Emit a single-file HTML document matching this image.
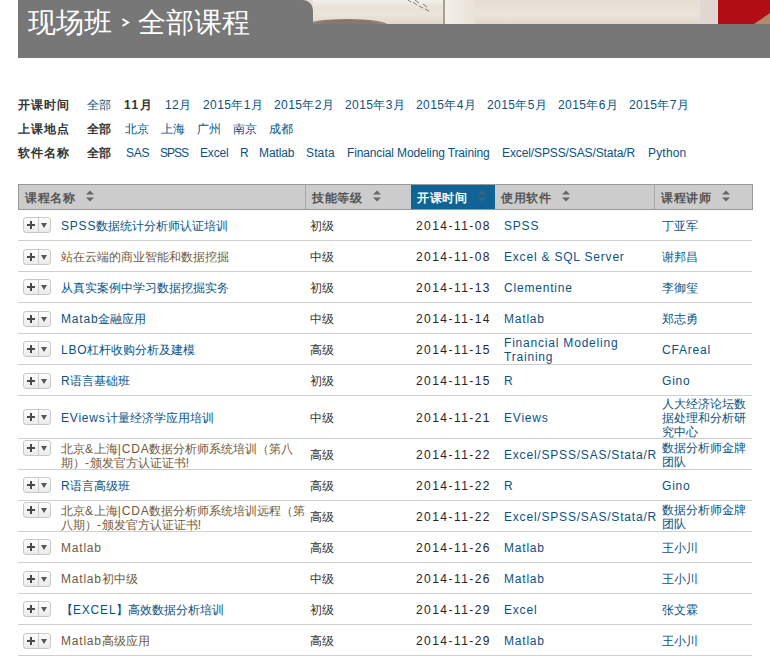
<!DOCTYPE html>
<html><head><meta charset="utf-8">
<style>
*{margin:0;padding:0;box-sizing:border-box}
html,body{width:770px;height:656px;overflow:hidden;background:#fff}
body{position:relative;font-family:"Liberation Sans",sans-serif;font-size:12px;color:#333}
.a{position:absolute;white-space:nowrap}
.photo{position:absolute;left:300px;top:0;width:470px;height:24px;background:linear-gradient(180deg,#e6ded3 0%,#ebe4da 60%,#e2d8cc 100%);overflow:hidden}
.tab{position:absolute;left:18px;top:0;width:295px;height:40px;background:#777;border-top-right-radius:10px}
.bar{position:absolute;left:18px;top:24px;width:752px;height:34px;background:#777}
.title{position:absolute;top:4px;color:#fff;font-family:"Liberation Serif",serif;font-size:28px;line-height:34px;white-space:nowrap}
.flab{font-weight:bold;color:#333}
.fl{position:absolute;line-height:24px;white-space:nowrap;color:#0a5283;letter-spacing:.4px}
.fl.flab{color:#333;letter-spacing:1px}
.hd{position:absolute;left:18px;top:184px;width:735px;height:26px;background:#ccc;border:1px solid #999}
.th{position:absolute;top:1px;height:24px;line-height:24px;letter-spacing:.7px;font-weight:bold;color:#555;white-space:nowrap}
.sep{position:absolute;top:0;width:1px;height:24px;background:#a8a8a8}
.act{position:absolute;left:392px;top:0;width:84px;height:24px;background:#0f6495}
.sort{position:absolute;top:5px;width:8px;height:12px}
.line{position:absolute;left:18px;width:734px;height:1px;background:#cfcfcf}
.cell{position:absolute;white-space:nowrap;line-height:14px;margin-top:1px}
.lt{letter-spacing:0.8px}
.dt{letter-spacing:1.45px;color:#262626}
.btn{position:absolute;margin-top:1px;left:23px;width:28px;height:16px;border:1px solid #c8c8c8;border-radius:3px;background:linear-gradient(#fdfdfd,#ebebeb)}
.btn i{position:absolute;left:14px;top:0;width:1px;height:14px;background:#cdcdcd}
.pl1{position:absolute;left:3px;top:6px;width:8px;height:2px;background:#4a4a4a}
.pl2{position:absolute;left:6px;top:3px;width:2px;height:8px;background:#4a4a4a}
.tri{position:absolute;left:17px;top:5px;width:0;height:0;border-left:3px solid transparent;border-right:3px solid transparent;border-top:5px solid #555}
</style></head><body>

<div class="photo">
 <div style="position:absolute;left:13px;top:0;width:130px;height:8px;background:linear-gradient(180deg,#f3f0eb,rgba(243,240,235,0))"></div>
 <div style="position:absolute;left:6px;top:19px;width:82px;height:12px;border-radius:50%;background:radial-gradient(ellipse at 50% 40%,#86766f 40%,#9a8c86 70%,#c9bfb5 100%)"></div>
 <svg style="position:absolute;left:105px;top:0" width="30" height="14"><path d="M3 0L6 2M8 2L12 5M14 6L18 8M20 9L24 11M10 0L14 3M18 4L22 7" stroke="#6b6259" stroke-width="1" opacity=".8"/></svg>
 <div style="position:absolute;left:143px;top:0;width:2px;height:24px;background:#aaa190"></div>
 <div style="position:absolute;left:145px;top:0;width:30px;height:24px;background:linear-gradient(90deg,#f2efea,#e9e3d9)"></div>
 <div style="position:absolute;left:400px;top:0;width:18px;height:24px;background:#e2d8d3"></div>
 <div style="position:absolute;left:418px;top:0;width:52px;height:24px;background:#b20e15"></div>
 <div style="position:absolute;left:454px;top:13px;width:0;height:0;border-bottom:11px solid #b38b6b;border-left:16px solid transparent"></div>
</div>
<div class="tab"></div>
<div class="bar"></div>
<div class="title" style="left:28px;top:6px">现场班</div>
<svg style="position:absolute;left:121px;top:18px" width="9" height="9"><path d="M1.5 1L7 4.5L1.5 8" stroke="#fff" stroke-width="2" fill="none"/></svg>
<div class="title" style="left:138px;top:6px">全部课程</div>

<div class="fl flab" style="left:18px;top:93px">开课时间</div>
<div class="fl flab" style="left:18px;top:117px">上课地点</div>
<div class="fl flab" style="left:18px;top:141px">软件名称</div>
<div class="fl" style="left:87px;top:93px">全部</div>
<div class="fl" style="left:124px;top:93px;color:#333;font-weight:bold;letter-spacing:1.6px">11月</div>
<div class="fl" style="left:165px;top:93px">12月</div>
<div class="fl" style="left:203px;top:93px">2015年1月</div>
<div class="fl" style="left:274px;top:93px">2015年2月</div>
<div class="fl" style="left:345px;top:93px">2015年3月</div>
<div class="fl" style="left:416px;top:93px">2015年4月</div>
<div class="fl" style="left:487px;top:93px">2015年5月</div>
<div class="fl" style="left:558px;top:93px">2015年6月</div>
<div class="fl" style="left:629px;top:93px">2015年7月</div>
<div class="fl" style="left:87px;top:117px;color:#333;font-weight:bold">全部</div>
<div class="fl" style="left:125px;top:117px">北京</div>
<div class="fl" style="left:161px;top:117px">上海</div>
<div class="fl" style="left:197px;top:117px">广州</div>
<div class="fl" style="left:233px;top:117px">南京</div>
<div class="fl" style="left:269px;top:117px">成都</div>
<div class="fl" style="left:87px;top:141px;color:#333;font-weight:bold">全部</div>
<div class="fl" style="left:126px;top:141px;letter-spacing:-0.27px">SAS</div>
<div class="fl" style="left:160px;top:141px;letter-spacing:-1px">SPSS</div>
<div class="fl" style="left:200px;top:141px;letter-spacing:-0.16px">Excel</div>
<div class="fl" style="left:240px;top:141px;letter-spacing:0px">R</div>
<div class="fl" style="left:259px;top:141px;letter-spacing:-0.1px">Matlab</div>
<div class="fl" style="left:306px;top:141px;letter-spacing:0.14px">Stata</div>
<div class="fl" style="left:347px;top:141px;letter-spacing:-0.13px">Financial Modeling Training</div>
<div class="fl" style="left:502px;top:141px;letter-spacing:-0.11px">Excel/SPSS/SAS/Stata/R</div>
<div class="fl" style="left:648px;top:141px;letter-spacing:0.18px">Python</div>
<div class="hd">
<div class="sep" style="left:286px"></div><div class="sep" style="left:635px"></div>
<div class="act"></div>
<div class="th" style="left:6px;color:#555">课程名称</div>
<div class="sort" style="left:67px"><svg width="8" height="12" viewBox="0 0 8 12"><path d="M0 4.5L4 0.5L8 4.5Z M0 7.5L4 11.5L8 7.5Z" fill="#666"/></svg></div>
<div class="th" style="left:293px;color:#555">技能等级</div>
<div class="sort" style="left:354px"><svg width="8" height="12" viewBox="0 0 8 12"><path d="M0 4.5L4 0.5L8 4.5Z M0 7.5L4 11.5L8 7.5Z" fill="#666"/></svg></div>
<div class="th" style="left:398px;color:#fff">开课时间</div>
<div class="sort" style="left:459px;opacity:.55"><svg width="8" height="12" viewBox="0 0 8 12"><path d="M0 4.5L4 0.5L8 4.5Z M0 7.5L4 11.5L8 7.5Z" fill="#666"/></svg></div>
<div class="th" style="left:482px;color:#555">使用软件</div>
<div class="sort" style="left:543px"><svg width="8" height="12" viewBox="0 0 8 12"><path d="M0 4.5L4 0.5L8 4.5Z M0 7.5L4 11.5L8 7.5Z" fill="#666"/></svg></div>
<div class="th" style="left:642px;color:#555">课程讲师</div>
<div class="sort" style="left:703px"><svg width="8" height="12" viewBox="0 0 8 12"><path d="M0 4.5L4 0.5L8 4.5Z M0 7.5L4 11.5L8 7.5Z" fill="#666"/></svg></div>
</div>
<div class="line" style="top:240px"></div>
<div class="btn" style="top:216px"><i></i><span class="pl1"></span><span class="pl2"></span><span class="tri"></span></div>
<div class="cell" style="left:61px;top:217.5px;color:#0a5283"><span class="lt">SPSS</span>数据统计分析师认证培训</div>
<div class="cell" style="left:310px;top:217.5px">初级</div>
<div class="cell dt" style="left:416px;top:217.5px">2014-11-08</div>
<div class="cell" style="left:504px;top:217.5px;color:#0a5283;letter-spacing:0.8px">SPSS</div>
<div class="cell" style="left:662px;top:217.5px;color:#0a5283">丁亚军</div>
<div class="line" style="top:271px"></div>
<div class="btn" style="top:248px"><i></i><span class="pl1"></span><span class="pl2"></span><span class="tri"></span></div>
<div class="cell" style="left:61px;top:248.5px;color:#6e5a40">站在云端的商业智能和数据挖掘</div>
<div class="cell" style="left:310px;top:248.5px">中级</div>
<div class="cell dt" style="left:416px;top:248.5px">2014-11-08</div>
<div class="cell" style="left:504px;top:248.5px;color:#0a5283;letter-spacing:0.8px">Excel &amp; SQL Server</div>
<div class="cell" style="left:662px;top:248.5px;color:#0a5283">谢邦昌</div>
<div class="line" style="top:302px"></div>
<div class="btn" style="top:278px"><i></i><span class="pl1"></span><span class="pl2"></span><span class="tri"></span></div>
<div class="cell" style="left:61px;top:279.5px;color:#0a5283">从真实案例中学习数据挖掘实务</div>
<div class="cell" style="left:310px;top:279.5px">初级</div>
<div class="cell dt" style="left:416px;top:279.5px">2014-11-13</div>
<div class="cell" style="left:504px;top:279.5px;color:#0a5283;letter-spacing:0.8px">Clementine</div>
<div class="cell" style="left:662px;top:279.5px;color:#0a5283">李御玺</div>
<div class="line" style="top:333px"></div>
<div class="btn" style="top:310px"><i></i><span class="pl1"></span><span class="pl2"></span><span class="tri"></span></div>
<div class="cell" style="left:61px;top:310.5px;color:#0a5283"><span class="lt">Matab</span>金融应用</div>
<div class="cell" style="left:310px;top:310.5px">中级</div>
<div class="cell dt" style="left:416px;top:310.5px">2014-11-14</div>
<div class="cell" style="left:504px;top:310.5px;color:#0a5283;letter-spacing:0.8px">Matlab</div>
<div class="cell" style="left:662px;top:310.5px;color:#0a5283">郑志勇</div>
<div class="line" style="top:364px"></div>
<div class="btn" style="top:340px"><i></i><span class="pl1"></span><span class="pl2"></span><span class="tri"></span></div>
<div class="cell" style="left:61px;top:341.5px;color:#0a5283"><span class="lt">LBO</span>杠杆收购分析及建模</div>
<div class="cell" style="left:310px;top:341.5px">高级</div>
<div class="cell dt" style="left:416px;top:341.5px">2014-11-15</div>
<div class="cell" style="left:504px;top:334.5px;color:#0a5283;letter-spacing:0.8px">Financial Modeling<br>Training</div>
<div class="cell" style="left:662px;top:341.5px;color:#0a5283"><span class="lt">CFAreal</span></div>
<div class="line" style="top:395px"></div>
<div class="btn" style="top:372px"><i></i><span class="pl1"></span><span class="pl2"></span><span class="tri"></span></div>
<div class="cell" style="left:61px;top:372.5px;color:#0a5283"><span class="lt">R</span>语言基础班</div>
<div class="cell" style="left:310px;top:372.5px">初级</div>
<div class="cell dt" style="left:416px;top:372.5px">2014-11-15</div>
<div class="cell" style="left:504px;top:372.5px;color:#0a5283;letter-spacing:0.8px">R</div>
<div class="cell" style="left:662px;top:372.5px;color:#0a5283"><span class="lt">Gino</span></div>
<div class="line" style="top:438px"></div>
<div class="btn" style="top:408px"><i></i><span class="pl1"></span><span class="pl2"></span><span class="tri"></span></div>
<div class="cell" style="left:61px;top:409.5px;color:#0a5283"><span class="lt">EViews</span>计量经济学应用培训</div>
<div class="cell" style="left:310px;top:409.5px">中级</div>
<div class="cell dt" style="left:416px;top:409.5px">2014-11-21</div>
<div class="cell" style="left:504px;top:409.5px;color:#0a5283;letter-spacing:0.8px">EViews</div>
<div class="cell" style="left:662px;top:395.5px;color:#0a5283">人大经济论坛数<br>据处理和分析研<br>究中心</div>
<div class="line" style="top:469px"></div>
<div class="btn" style="top:439px"><i></i><span class="pl1"></span><span class="pl2"></span><span class="tri"></span></div>
<div class="cell" style="left:61px;top:440.5px;color:#6e5a40">北京<span class="lt">&amp;</span>上海<span class="lt">|CDA</span>数据分析师系统培训（第八<br>期）<span class="lt">-</span>颁发官方认证证书<span class="lt">!</span></div>
<div class="cell" style="left:310px;top:446.5px">高级</div>
<div class="cell dt" style="left:416px;top:446.5px">2014-11-22</div>
<div class="cell" style="left:504px;top:446.5px;color:#0a5283;letter-spacing:0.8px">Excel/SPSS/SAS/Stata/R</div>
<div class="cell" style="left:662px;top:439.5px;color:#0a5283">数据分析师金牌<br>团队</div>
<div class="line" style="top:500px"></div>
<div class="btn" style="top:476px"><i></i><span class="pl1"></span><span class="pl2"></span><span class="tri"></span></div>
<div class="cell" style="left:61px;top:477.5px;color:#0a5283"><span class="lt">R</span>语言高级班</div>
<div class="cell" style="left:310px;top:477.5px">高级</div>
<div class="cell dt" style="left:416px;top:477.5px">2014-11-22</div>
<div class="cell" style="left:504px;top:477.5px;color:#0a5283;letter-spacing:0.8px">R</div>
<div class="cell" style="left:662px;top:477.5px;color:#0a5283"><span class="lt">Gino</span></div>
<div class="line" style="top:531px"></div>
<div class="btn" style="top:501px"><i></i><span class="pl1"></span><span class="pl2"></span><span class="tri"></span></div>
<div class="cell" style="left:61px;top:502.5px;color:#6e5a40">北京<span class="lt">&amp;</span>上海<span class="lt">|CDA</span>数据分析师系统培训远程（第<br>八期）<span class="lt">-</span>颁发官方认证证书<span class="lt">!</span></div>
<div class="cell" style="left:310px;top:508.5px">高级</div>
<div class="cell dt" style="left:416px;top:508.5px">2014-11-22</div>
<div class="cell" style="left:504px;top:508.5px;color:#0a5283;letter-spacing:0.8px">Excel/SPSS/SAS/Stata/R</div>
<div class="cell" style="left:662px;top:501.5px;color:#0a5283">数据分析师金牌<br>团队</div>
<div class="line" style="top:562px"></div>
<div class="btn" style="top:538px"><i></i><span class="pl1"></span><span class="pl2"></span><span class="tri"></span></div>
<div class="cell" style="left:61px;top:539.5px;color:#6e5a40"><span class="lt">Matlab</span></div>
<div class="cell" style="left:310px;top:539.5px">高级</div>
<div class="cell dt" style="left:416px;top:539.5px">2014-11-26</div>
<div class="cell" style="left:504px;top:539.5px;color:#0a5283;letter-spacing:0.8px">Matlab</div>
<div class="cell" style="left:662px;top:539.5px;color:#0a5283">王小川</div>
<div class="line" style="top:593px"></div>
<div class="btn" style="top:570px"><i></i><span class="pl1"></span><span class="pl2"></span><span class="tri"></span></div>
<div class="cell" style="left:61px;top:570.5px;color:#6e5a40"><span class="lt">Matlab</span>初中级</div>
<div class="cell" style="left:310px;top:570.5px">中级</div>
<div class="cell dt" style="left:416px;top:570.5px">2014-11-26</div>
<div class="cell" style="left:504px;top:570.5px;color:#0a5283;letter-spacing:0.8px">Matlab</div>
<div class="cell" style="left:662px;top:570.5px;color:#0a5283">王小川</div>
<div class="line" style="top:624px"></div>
<div class="btn" style="top:600px"><i></i><span class="pl1"></span><span class="pl2"></span><span class="tri"></span></div>
<div class="cell" style="left:61px;top:601.5px;color:#0a5283">【<span class="lt">EXCEL</span>】高效数据分析培训</div>
<div class="cell" style="left:310px;top:601.5px">初级</div>
<div class="cell dt" style="left:416px;top:601.5px">2014-11-29</div>
<div class="cell" style="left:504px;top:601.5px;color:#0a5283;letter-spacing:0.8px">Excel</div>
<div class="cell" style="left:662px;top:601.5px;color:#0a5283">张文霖</div>
<div class="line" style="top:655px"></div>
<div class="btn" style="top:632px"><i></i><span class="pl1"></span><span class="pl2"></span><span class="tri"></span></div>
<div class="cell" style="left:61px;top:632.5px;color:#6e5a40"><span class="lt">Matlab</span>高级应用</div>
<div class="cell" style="left:310px;top:632.5px">高级</div>
<div class="cell dt" style="left:416px;top:632.5px">2014-11-29</div>
<div class="cell" style="left:504px;top:632.5px;color:#0a5283;letter-spacing:0.8px">Matlab</div>
<div class="cell" style="left:662px;top:632.5px;color:#0a5283">王小川</div>
</body></html>
